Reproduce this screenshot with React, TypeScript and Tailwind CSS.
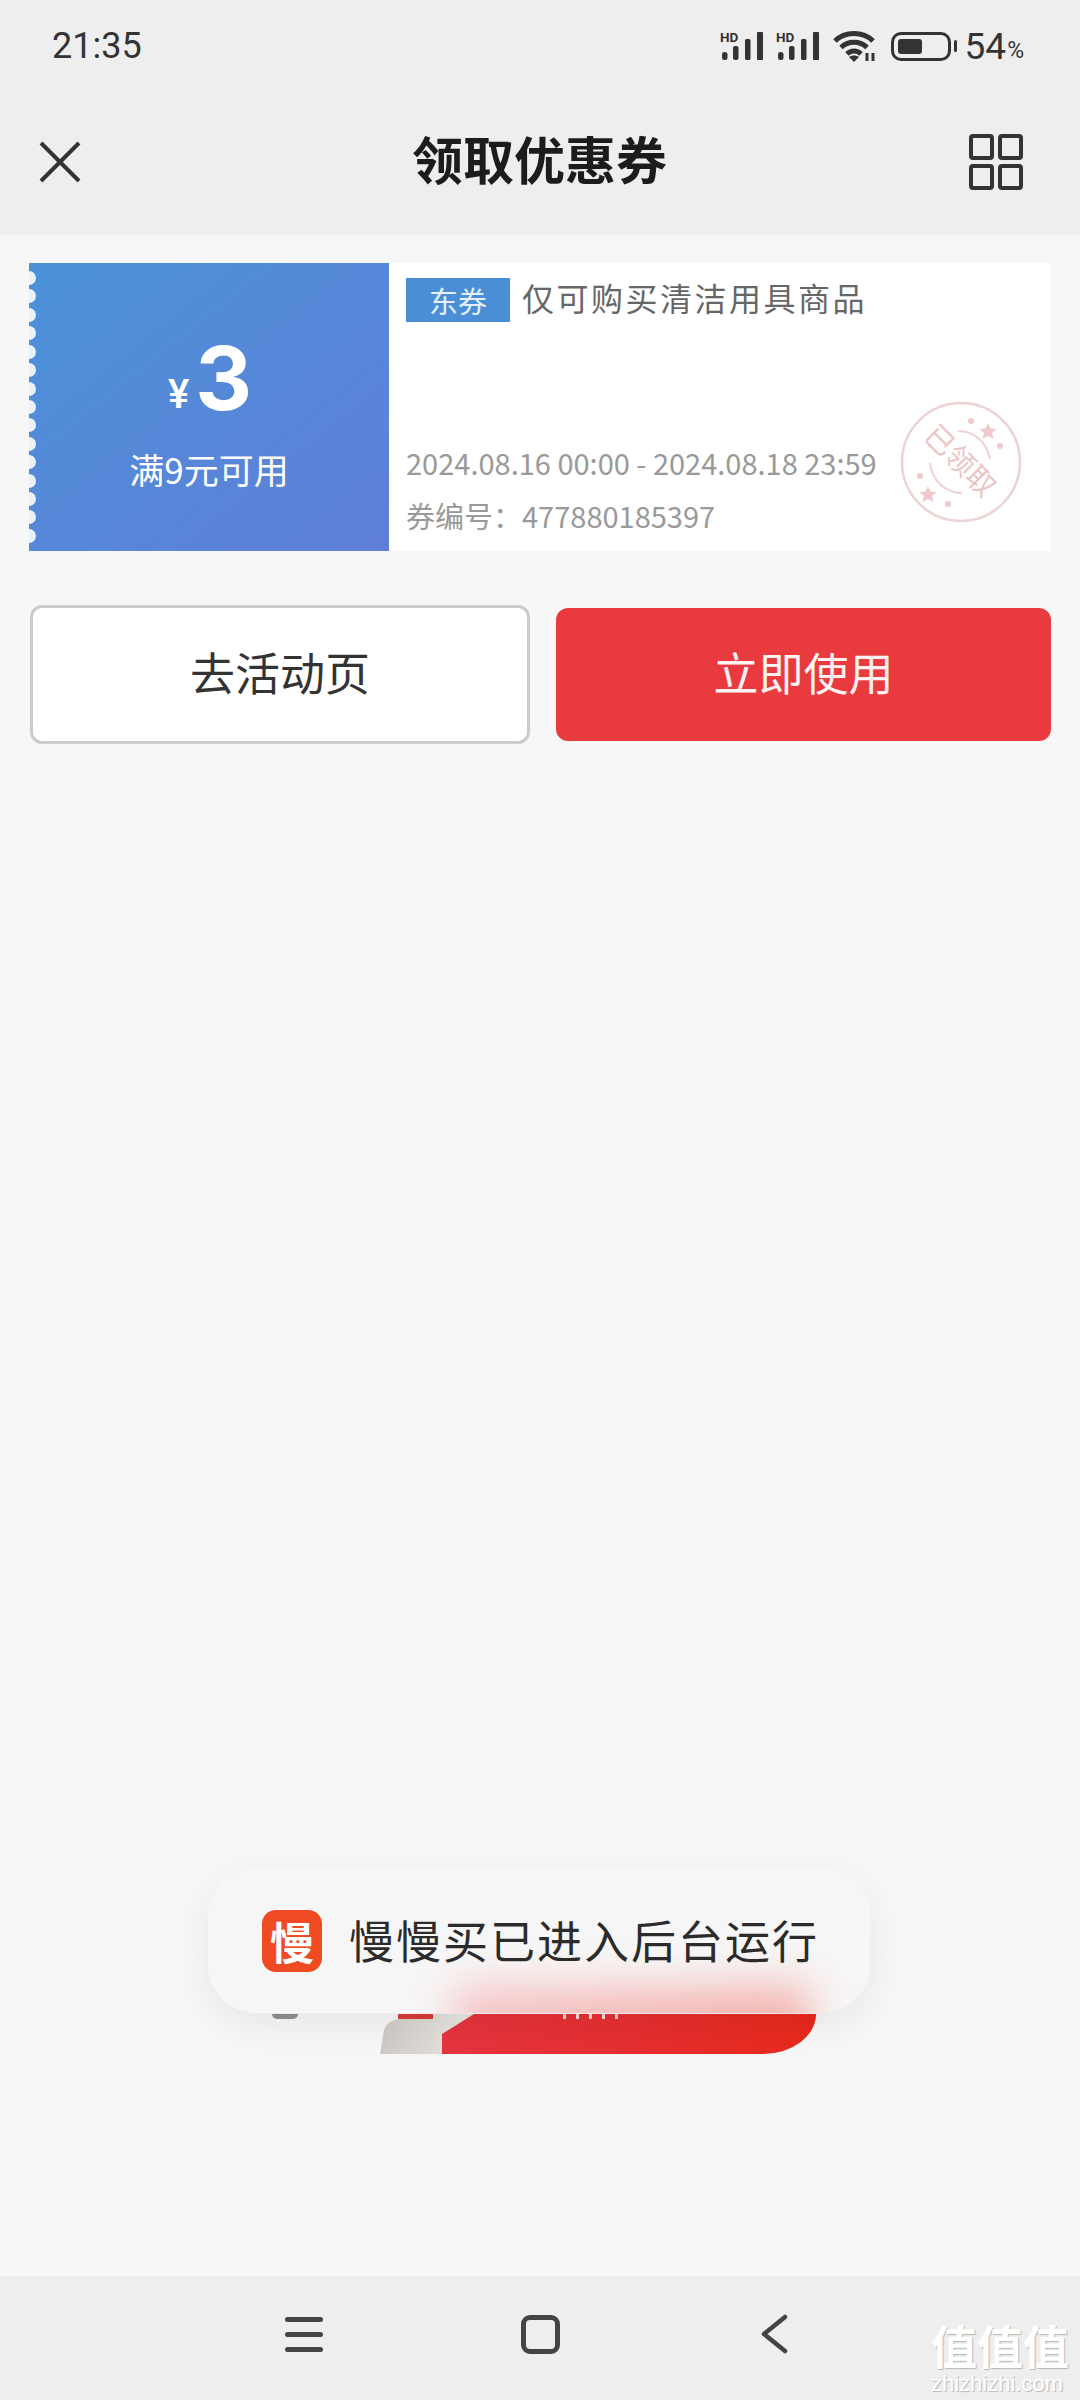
const CJK = { fontFamily: '"Noto Sans CJK SC", "Noto Sans", sans-serif' }
const SCALLOPS = Array.from({ length: 15 })
const HIDDEN_TEXT_BITS = Array.from({ length: 5 })

function SignalIcon() {
  return (
    <svg width="45" height="32" viewBox="0 0 45 32" fill="#333">
      <text x="0" y="12" fontSize="13.500" fontWeight="700" fontFamily="Roboto, sans-serif" fill="#333">HD</text>
      <rect x="2" y="22" width="5.500" height="8" rx="2.500" />
      <rect x="13" y="16" width="5.500" height="14" rx="2" />
      <rect x="25" y="9" width="5.500" height="21" rx="1.500" />
      <rect x="37" y="2" width="6" height="28" rx="1" />
    </svg>
  )
}

function WifiIcon() {
  return (
    <svg width="44" height="32" viewBox="0 0 44 32" fill="none" stroke="#333" strokeWidth="5">
      <path d="M2 11 C 12 1, 30 1, 40 11" />
      <path d="M8 17.500 C 15 10.500, 27 10.500, 34 17.500" />
      <path d="M14 24 C 18 20, 24 20, 28 24" />
      <path d="M21 32 L16 27 C 19 25, 23 25, 26 27 Z" fill="#333" stroke="none" />
      <path d="M34 31 V23 M40 31 V23" strokeWidth="3" />
    </svg>
  )
}

function Stamp() {
  return (
    <svg width="122" height="122" viewBox="0 0 122 122" fill="none" stroke="#edd3d4" strokeWidth="2.500" className="absolute right-[29px] bottom-[28px]">
      <circle cx="61" cy="61" r="59" />
      <path d="M58 30 C 74 30, 86 40, 90 58" strokeWidth="2" />
      <path d="M30 62 C 32 80, 46 92, 62 92" strokeWidth="2" />
      <g fill="#efc9cb" stroke="none">
        <circle cx="71" cy="20" r="3" />
        <circle cx="100" cy="45" r="3" />
        <circle cx="20" cy="75" r="3" />
        <circle cx="48" cy="103" r="3" />
        <path d="M88 22 l2.500 5.500 6 .5 -4.500 4 1.500 6 -5.500 -3 -5.500 3 1.500 -6 -4.500 -4 6 -.5z" />
        <path d="M28 85 l2.500 5.500 6 .5 -4.500 4 1.500 6 -5.500 -3 -5.500 3 1.500 -6 -4.500 -4 6 -.5z" />
      </g>
      <text x="60" y="70" textAnchor="middle" fontSize="29" fill="#ecc5c7" stroke="none" transform="rotate(45 60 60)" style={CJK}>已领取</text>
    </svg>
  )
}

// the bottle of the product banner, only its lower part shows below the toast
function Bottle() {
  return (
    <svg width="96" height="40" viewBox="0 38 96 40" className="shrink-0 relative z-10">
      <defs>
        <linearGradient id="bottle" x1="0" x2="1" y1="0" y2="0">
          <stop offset="0" stopColor="#cdc9c4" />
          <stop offset="0.65" stopColor="#e2dfdb" />
          <stop offset="1" stopColor="#e8e6e3" />
        </linearGradient>
      </defs>
      <path d="M0 78 L4 54 Q7 45 18 43 L18 38 L94 38 L62 58 L62 78 Z" fill="url(#bottle)" />
      <rect x="18" y="38" width="35" height="5" rx="1" fill="#d93a36" />
    </svg>
  )
}

export default function App() {
  return (
    <div className="relative w-[1080px] h-[2400px] overflow-hidden flex flex-col bg-[#f7f7f7]" style={CJK}>
      <div className="bg-[#eeeeee] shrink-0">
        {/* status bar */}
        <div className="h-[92px] pl-[52px] pr-[56px] flex items-center justify-between text-[#333]">
          <span className="text-[36px] leading-none" style={{ fontFamily: 'Roboto, sans-serif' }}>21:35</span>
          <div className="flex items-center">
            <SignalIcon />
            <div className="ml-[11px]"><SignalIcon /></div>
            <div className="ml-[12px]"><WifiIcon /></div>
            <div className="ml-[14px] w-[60px] h-[29px] rounded-[10px] border-[3px] border-[#333] p-[4px]">
              <div className="w-[24px] h-full rounded-[3px] bg-[#333]" />
            </div>
            <div className="ml-[3px] w-[3px] h-[12px] bg-[#333] rounded-full" />
            <span className="ml-[8px] text-[37px] leading-none" style={{ fontFamily: 'Roboto, sans-serif' }}>54</span>
            <span className="ml-[1px] mt-[8px] text-[23px] leading-none" style={{ fontFamily: 'Roboto, sans-serif' }}>%</span>
          </div>
        </div>
        {/* title bar */}
        <div className="relative h-[143px] pl-[39px] pr-[57px] flex items-center justify-between">
          <svg width="42" height="42" viewBox="0 0 42 42" fill="none" stroke="#333" strokeWidth="4" className="-mt-[3px]">
            <path d="M2 2 L40 40 M40 2 L2 40" />
          </svg>
          <h1 className="absolute left-[412px] top-[36px] text-[51px] leading-[60px] font-bold text-[#1c1c1c] whitespace-nowrap">领取优惠券</h1>
          <svg width="54" height="56" viewBox="0 0 54 56" fill="none" stroke="#333" strokeWidth="4" className="-mt-[3px]">
            <rect x="2" y="2" width="21" height="22" rx="2" />
            <rect x="31" y="2" width="21" height="22" rx="2" />
            <rect x="2" y="32" width="21" height="22" rx="2" />
            <rect x="31" y="32" width="21" height="22" rx="2" />
          </svg>
        </div>
      </div>

      <main className="flex-1 px-[29px] pt-[28px]">
        {/* coupon */}
        <div className="relative flex h-[288px] bg-white">
          <div className="relative w-[360px] shrink-0 flex flex-col items-center text-white bg-gradient-to-br from-[#4a92d8] to-[#5f7ed8]">
            <div className="absolute left-0 top-[8px] bottom-[8px] flex flex-col justify-between">
              {SCALLOPS.map((_, i) => (
                <span key={i} className="block w-[7px] h-[14px] rounded-r-full bg-[#e9f1fb]" />
              ))}
            </div>
            <div className="flex items-end h-[152px] ml-[2px]">
              <span className="text-[40px] leading-none font-medium" style={{ fontFamily: 'Roboto, sans-serif' }}>¥</span>
              <span className="ml-[6px] text-[88px] leading-[74px] font-bold" style={{ fontFamily: 'Inter, sans-serif' }}>3</span>
            </div>
            <span className="mt-[34px] text-[35px] leading-[40px] whitespace-nowrap">满9元可用</span>
          </div>
          <div className="relative flex-1 pl-[17px] pt-[15px]">
            <div className="flex items-center">
              <span className="w-[104px] h-[44px] flex items-center justify-center bg-[#4a8fd6] text-[29px] leading-none text-[#e6f0fa]">东券</span>
              <span className="ml-[12px] -mt-[6px] text-[32px] leading-[40px] tracking-[2.5px] text-[#666] whitespace-nowrap">仅可购买清洁用具商品</span>
            </div>
            <p className="mt-[120px] text-[29px] leading-[40px] text-[#999] whitespace-nowrap">2024.08.16 00:00 - 2024.08.18 23:59</p>
            <p className="mt-[13px] text-[29px] leading-[40px] text-[#999] whitespace-nowrap">券编号：477880185397</p>
            <Stamp />
          </div>
        </div>

        {/* actions */}
        <div className="mt-[54px] flex items-center">
          <button className="ml-[1px] w-[500px] h-[139px] rounded-[12px] border-[3px] border-[#cccccc] bg-white pb-[6px] text-[45px] text-[#333]">去活动页</button>
          <button className="ml-[26px] w-[495px] h-[133px] rounded-[12px] bg-[#e93b3f] pb-[6px] text-[45px] text-[#fdf2f2]">立即使用</button>
        </div>

        {/* page content peeking out under the toast */}
        <div className="mt-[1270px] flex items-start">
          <div className="ml-[243px] w-[26px] h-[5px] rounded-b-full bg-[#8f8f8f]" />
          <div className="ml-[82px] -mr-[34px]"><Bottle /></div>
          <div className="w-[374px] h-[40px] pl-[121px] flex gap-[10px] rounded-br-[53px_40px] bg-gradient-to-r from-[#e5343f] to-[#e8291b]">
            {HIDDEN_TEXT_BITS.map((_, i) => (
              <span key={i} className="w-[3px] h-[5px] bg-white/80" />
            ))}
          </div>
        </div>
      </main>

      {/* nav bar */}
      <nav className="relative h-[124px] shrink-0 bg-[#eeeeee]">
        <div className="flex items-center h-full pb-[8px]">
          <div className="ml-[285px] w-[38px] flex flex-col gap-[10px]">
            <span className="h-[5px] rounded-full bg-[#444]" />
            <span className="h-[5px] rounded-full bg-[#444]" />
            <span className="h-[5px] rounded-full bg-[#444]" />
          </div>
          <div className="ml-[198px] w-[39px] h-[39px] rounded-[9px] border-[5px] border-[#444]" />
          <svg width="28" height="40" viewBox="0 0 28 40" fill="none" stroke="#444" strokeWidth="4.500" strokeLinecap="round" strokeLinejoin="round" className="ml-[200px]">
            <path d="M25 3 L4 20 L25 37" />
          </svg>
        </div>
        {/* site watermark */}
        <div className="absolute left-[931px] top-[44px] w-[140px] text-white [text-shadow:1px_1px_1px_#b5b5b5]">
          <div className="text-[46px] leading-[48px] font-bold whitespace-nowrap">值值值</div>
          <div className="mt-[6px] text-[22px] leading-[20px] whitespace-nowrap" style={{ fontFamily: '"Liberation Sans", sans-serif' }}>zhizhizhi.com</div>
        </div>
      </nav>

      {/* toast, with the banner glowing through its frosted bottom edge */}
      <div className="absolute z-20 left-[208px] top-[1868px] w-[662px] h-[145px] rounded-[48px] shadow-[0_12px_40px_rgba(0,0,0,0.07)]">
        <div className="absolute inset-0 rounded-[48px] overflow-hidden bg-[#f7f6f6]">
          <div className="absolute left-[245px] top-[118px] w-[356px] h-[70px] blur-[20px] bg-gradient-to-r from-[#f6c6c8] to-[#f3b2ad]" />
        </div>
        <div className="relative h-full flex items-center pl-[54px]">
          <div className="w-[60px] h-[62px] rounded-[14px] bg-[#ef4a22] text-white flex items-center justify-center text-[44px] leading-none font-bold">慢</div>
          <span className="ml-[27px] -mt-[2px] text-[45px] leading-none tracking-[2px] text-[#2b2b2b] whitespace-nowrap">慢慢买已进入后台运行</span>
        </div>
      </div>
    </div>
  )
}
